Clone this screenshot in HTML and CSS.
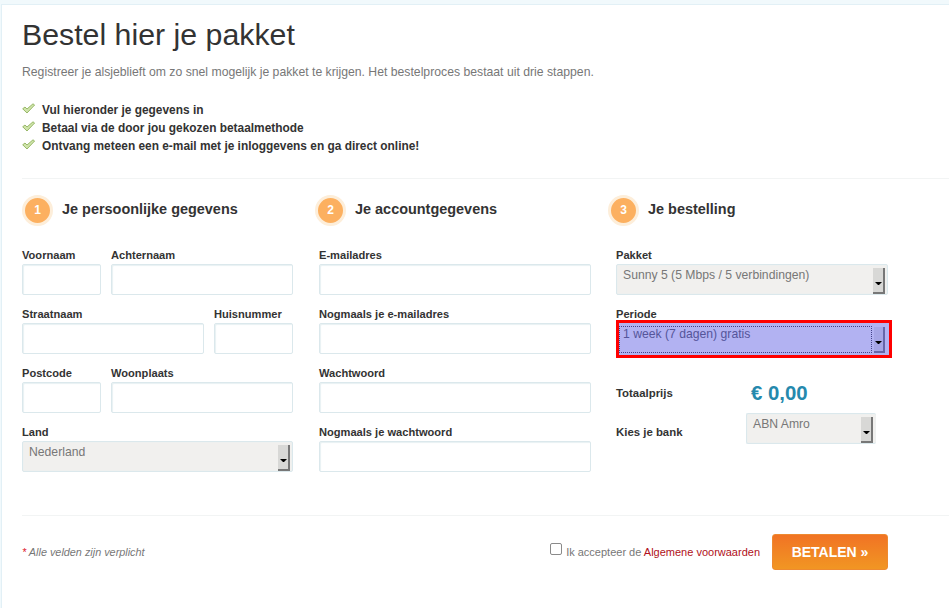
FILE: index.html
```html
<!DOCTYPE html>
<html lang="nl">
<head>
<meta charset="utf-8">
<title>Bestel hier je pakket</title>
<link rel="stylesheet" href="styles.css">
</head>
<body>
<main class="panel">
  <h1 class="title">Bestel hier je pakket</h1>
  <p class="intro">Registreer je alsjeblieft om zo snel mogelijk je pakket te krijgen. Het bestelproces bestaat uit drie stappen.</p>
  <ul class="checks">
    <li><svg class="check" viewBox="0 0 13 11"><path d="M0.7 5.8 L3 4 L5 6 L11 0.8 L12.6 2 L5 10 Z" fill="#cfe4aa" stroke="#98b868" stroke-width="1"/></svg>Vul hieronder je gegevens in</li>
    <li><svg class="check" viewBox="0 0 13 11"><path d="M0.7 5.8 L3 4 L5 6 L11 0.8 L12.6 2 L5 10 Z" fill="#cfe4aa" stroke="#98b868" stroke-width="1"/></svg>Betaal via de door jou gekozen betaalmethode</li>
    <li><svg class="check" viewBox="0 0 13 11"><path d="M0.7 5.8 L3 4 L5 6 L11 0.8 L12.6 2 L5 10 Z" fill="#cfe4aa" stroke="#98b868" stroke-width="1"/></svg>Ontvang meteen een e-mail met je inloggevens en ga direct online!</li>
  </ul>
  <hr class="rule">
  <div class="steps">
    <div class="step"><span class="num">1</span><h2>Je persoonlijke gegevens</h2></div>
    <div class="step"><span class="num">2</span><h2>Je accountgegevens</h2></div>
    <div class="step"><span class="num">3</span><h2>Je bestelling</h2></div>
  </div>
  <div class="cols">
    <section class="col">
      <div class="row">
        <div class="field w79"><label>Voornaam</label><div class="input"></div></div>
        <div class="field grow"><label>Achternaam</label><div class="input"></div></div>
      </div>
      <div class="row">
        <div class="field grow"><label>Straatnaam</label><div class="input"></div></div>
        <div class="field w79"><label>Huisnummer</label><div class="input"></div></div>
      </div>
      <div class="row">
        <div class="field w79"><label>Postcode</label><div class="input"></div></div>
        <div class="field grow"><label>Woonplaats</label><div class="input"></div></div>
      </div>
      <div class="row">
        <div class="field grow"><label>Land</label>
          <div class="select"><span class="value">Nederland</span><span class="arrow"><i></i></span></div>
        </div>
      </div>
    </section>
    <section class="col wide">
      <div class="row"><div class="field grow"><label>E-mailadres</label><div class="input"></div></div></div>
      <div class="row"><div class="field grow"><label>Nogmaals je e-mailadres</label><div class="input"></div></div></div>
      <div class="row"><div class="field grow"><label>Wachtwoord</label><div class="input"></div></div></div>
      <div class="row"><div class="field grow"><label>Nogmaals je wachtwoord</label><div class="input"></div></div></div>
    </section>
    <section class="col wide">
      <div class="row"><div class="field grow"><label>Pakket</label>
        <div class="select"><span class="value">Sunny 5 (5 Mbps / 5 verbindingen)</span><span class="arrow"><i></i></span></div>
      </div></div>
      <div class="row"><div class="field grow"><label>Periode</label>
        <div class="select focus"><span class="value">1 week (7 dagen) gratis</span><span class="arrow"><i></i></span></div>
      </div></div>
      <div class="total"><span class="side-label">Totaalprijs</span><span class="price">€ 0,00</span></div>
      <div class="bank"><span class="side-label bank-label">Kies je bank</span>
        <div class="select small"><span class="value">ABN Amro</span><span class="arrow"><i></i></span></div>
      </div>
    </section>
  </div>
  <hr class="rule bottom">
  <footer class="foot">
    <p class="req"><span class="star">*</span> Alle velden zijn verplicht</p>
    <div class="submit">
      <span class="box"></span>
      <span class="terms">Ik accepteer de <a href="#">Algemene voorwaarden</a></span>
      <button class="pay" type="button">BETALEN »</button>
    </div>
  </footer>
</main>
</body>
</html>
```
FILE: styles.css
```css
html, body { margin: 0; padding: 0; }
body {
  width: 949px;
  height: 608px;
  overflow: hidden;
  background: #f1f9fc;
  font-family: "Liberation Sans", Arial, sans-serif;
  color: #333;
  padding-top: 4px;
  box-sizing: border-box;
}
.panel {
  margin-left: 1px;
  width: 948px;
  height: 604px;
  box-sizing: border-box;
  background: #fff;
  border-left: 1px solid #e2f0f6;
  border-top: 1px solid #e2f0f6;
  padding: 0 0 0 20px;
}
.title {
  margin: 12px 0 0;
  font-size: 30.3px;
  line-height: 36px;
  font-weight: 400;
  color: #333;
}
.intro {
  margin: 12px 0 0;
  font-size: 12.22px;
  line-height: 14px;
  color: #777;
}
.checks {
  list-style: none;
  margin: 22px 0 0;
  padding: 0;
  font-size: 11.9px;
  font-weight: 700;
  line-height: 18px;
  color: #333;
}
.checks li { display: flex; align-items: center; }
.check { width: 13px; height: 11px; margin: -4px 7px 0 0; flex: none; }
.rule {
  margin: 23px 0 0;
  width: 927px;
  height: 1px;
  border: 0;
  background: #f2f4f4;
}
.steps { display: flex; margin-top: 16px; }
.step { width: 293px; display: flex; align-items: center; }
.num {
  box-sizing: content-box;
  width: 25px;
  height: 25px;
  border: 3px solid #fdeeda;
  border-radius: 50%;
  background: #fcb060;
  color: #fff;
  font-size: 12px;
  font-weight: 700;
  line-height: 25px;
  text-align: center;
  flex: none;
}
.step h2 {
  margin: -3px 0 0 9px;
  font-size: 14.45px;
  line-height: 18px;
  font-weight: 700;
  color: #333;
}
.cols { display: flex; margin-top: 22px; }
.col { width: 271px; }
.col.wide { width: 272px; margin-left: 26px; }
.col.wide + .col.wide { margin-left: 25px; }
.row { display: flex; gap: 10px; margin-bottom: 12px; }
.field { display: flex; flex-direction: column; }
.w79 { width: 79px; flex: none; }
.grow { flex: 1; min-width: 0; }
label {
  display: block;
  font-size: 11.1px;
  font-weight: 700;
  line-height: 14px;
  margin-bottom: 2px;
  color: #333;
}
.input, .select {
  box-sizing: border-box;
  height: 31px;
  border: 1px solid #dbe8ec;
  border-radius: 2px;
  box-shadow: inset 1px 1px 1px #e8f1f3;
  background: #fff;
}
.select {
  display: flex;
  justify-content: space-between;
  background: #f1f0ee;
  color: #777;
  font-size: 12.2px;
  line-height: 14px;
  padding: 2px 2px 0 6px;
  box-shadow: inset 0 0 0 1px #eef0ef;
}
.value { padding-top: 1px; white-space: nowrap; }
.arrow {
  width: 12px;
  flex: none;
  box-sizing: border-box;
  background: #d8d8d6;
  border-right: 2px solid #777;
  border-bottom: 2px solid #777;
  margin-top: 1px;
  display: flex;
  align-items: center;
  justify-content: center;
  padding-top: 6px;
}
.arrow i {
  width: 1px;
  height: 0;
  border: 3px solid transparent;
  border-top: 3px solid #000;
  border-bottom: 0;
}
.select.focus {
  height: 38px;
  margin-top: -3px;
  width: 276px;
  border: 3px solid #f00;
  border-radius: 0;
  background: #b2b2f2;
  box-shadow: none;
  color: #55559a;
  padding: 3px 4px 2px 0;
}
.select.focus .value {
  flex: 1;
  margin-right: 2px;
  padding: 0 0 0 3px;
  border: 1px dotted #44448a;
}
.select.focus .arrow { background: #a6a6e6; border-color: #6666aa; margin: 1px 0 0; width: 11px; }
.total {
  display: flex;
  align-items: center;
  margin-top: 23px;
  height: 24px;
}
.side-label {
  display: block;
  width: 130px;
  flex: none;
  font-size: 11.4px;
  font-weight: 700;
  color: #333;
}
.bank-label { padding-top: 7px; }
.price {
  font-size: 20.4px;
  font-weight: 700;
  line-height: 24px;
  color: #2589ad;
  margin-left: 5px;
}
.bank { display: flex; align-items: center; margin-top: 8px; }
.select.small { width: 130px; height: 31px; border-right-width: 0; padding-right: 3px; }
.rule.bottom { margin-top: 31px; }
.foot {
  width: 866px;
  display: flex;
  justify-content: space-between;
  align-items: center;
  margin-top: 18px;
}
.req { margin: 0; font-size: 10.85px; font-style: italic; color: #777; }
.star { color: #e0202c; }
.submit { display: flex; align-items: center; }
.box {
  width: 10px;
  height: 10px;
  border: 1px solid #8a8a8a;
  border-radius: 2px;
  background: #fff;
  margin: -7px 4px 0 0;
}
.terms { font-size: 11px; color: #777; }
.terms a { color: #b01020; text-decoration: none; }
.pay {
  margin-left: 12px;
  width: 116px;
  height: 36px;
  border: 1px solid #ee8a30;
  border-radius: 3px;
  background: linear-gradient(#f17324, #f19623);
  color: #fff;
  font-family: "Liberation Sans", Arial, sans-serif;
  font-size: 14px;
  font-weight: 700;
  padding: 0;
}
```
